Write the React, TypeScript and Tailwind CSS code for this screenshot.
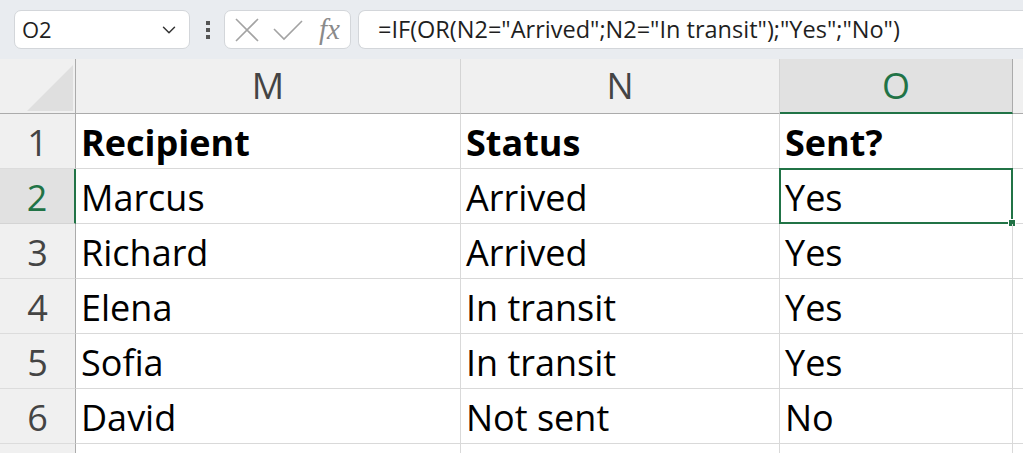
import { ChevronDown } from "lucide-react";

const rows = [
  { n: 1, cells: ["Recipient", "Status", "Sent?"], bold: true },
  { n: 2, cells: ["Marcus", "Arrived", "Yes"] },
  { n: 3, cells: ["Richard", "Arrived", "Yes"] },
  { n: 4, cells: ["Elena", "In transit", "Yes"] },
  { n: 5, cells: ["Sofia", "In transit", "Yes"] },
  { n: 6, cells: ["David", "Not sent", "No"] },
  { n: 7, cells: ["", "", ""] },
];

const cellFont = { fontFamily: '"Open Sans", "Noto Sans", sans-serif' };

function Toolbar() {
  return (
    <div className="flex h-[59px] items-center bg-[#e9ecf0] pl-[14px]" style={cellFont}>
      <div className="flex h-[39px] w-[176px] items-center justify-between rounded-[7px] border border-[#d3d6da] bg-white pl-[7px] pr-[9px]">
        <span className="text-[22px] text-[#1f1f1f]">O2</span>
        <ChevronDown size={22} strokeWidth={1.6} className="text-[#333]" />
      </div>
      <div className="ml-[16px] flex flex-col gap-[3px]">
        <span className="h-[4px] w-[4px] bg-[#555]" />
        <span className="h-[4px] w-[4px] bg-[#555]" />
        <span className="h-[4px] w-[4px] bg-[#555]" />
      </div>
      <div className="ml-[14px] flex h-[39px] w-[127px] items-center rounded-[7px] border border-[#d3d6da] bg-white pl-[9px]">
        <svg width="26" height="26" viewBox="0 0 26 26" fill="none" stroke="#a3a3a3" strokeWidth="1.6">
          <path d="M2 2 L24 24 M24 2 L2 24" />
        </svg>
        <svg width="30" height="22" viewBox="0 0 30 22" fill="none" stroke="#a3a3a3" strokeWidth="1.6" className="ml-[13px]">
          <path d="M1 10 L11 20 L29 2" />
        </svg>
        <span
          className="ml-[16px] text-[29px] italic leading-none text-[#8a8a8a]"
          style={{ fontFamily: '"Liberation Serif", serif' }}
        >
          fx
        </span>
      </div>
      <div className="ml-[7px] flex h-[39px] flex-1 items-center rounded-l-[7px] border border-r-0 border-[#d3d6da] bg-white pl-[19px] text-[23.5px] text-[#1f1f1f]">
        =IF(OR(N2="Arrived";N2="In transit");"Yes";"No")
      </div>
    </div>
  );
}

function CornerCell() {
  return (
    <div className="flex h-[55px] items-end justify-end border-b border-r border-[#ababab] bg-[#f0f0f0] pb-[2px] pr-[2px]">
      <svg width="46" height="46" viewBox="0 0 46 46">
        <polygon points="0,46 46,46 46,0" fill="#dfdfdf" />
      </svg>
    </div>
  );
}

function ColHeader({ label, active }: { label: string; active?: boolean }) {
  return (
    <div
      className={
        active
          ? "flex h-[55px] items-center justify-center border-b-2 border-r border-b-[#217346] border-r-[#ababab] bg-[#e1e1e1] text-[36px] text-[#217346]"
          : "flex h-[55px] items-center justify-center border-b border-r border-b-[#ababab] border-r-[#d4d4d4] bg-[#f0f0f0] text-[36px] text-[#444]"
      }
    >
      {label}
    </div>
  );
}

export default function App() {
  return (
    <div className="h-[453px] w-[1023px] overflow-hidden bg-white">
      <Toolbar />
      <div className="grid grid-cols-[76px_385px_319px_233px_1fr]" style={cellFont}>
        <CornerCell />
        <ColHeader label="M" />
        <ColHeader label="N" />
        <ColHeader label="O" active />
        <div className="h-[55px] border-b border-[#ababab] bg-[#f0f0f0]" />
        {rows.map((r) => (
          <RowCells key={r.n} n={r.n} cells={r.cells} bold={r.bold} />
        ))}
      </div>
    </div>
  );
}

function RowCells({ n, cells, bold }: { n: number; cells: string[]; bold?: boolean }) {
  const active = n === 2;
  const label = n < 7 ? n : "";
  return (
    <>
      <div
        className={
          active
            ? "flex h-[55px] items-center justify-center border-b border-r-2 border-b-[#d4d4d4] border-r-[#217346] bg-[#e1e1e1] pt-[3px] text-[36px] text-[#217346]"
            : "flex h-[55px] items-center justify-center border-b border-r border-b-[#dcdcdc] border-r-[#ababab] bg-[#f0f0f0] pt-[3px] text-[36px] text-[#444]"
        }
      >
        {label}
      </div>
      {cells.map((c, i) => (
        <div
          key={i}
          className={
            "relative flex h-[55px] items-center border-b border-r border-[#d9d9d9] pl-[5px] pt-[4px] text-[36px] leading-none text-black " +
            (bold ? "font-bold" : "")
          }
        >
          {c}
          {active && i === 2 && (
            <div className="absolute -left-px -top-px bottom-[-1px] right-[-1px] border-2 border-[#217346]">
              <div className="absolute -bottom-[5px] -right-[5px] h-[8px] w-[8px] border border-white bg-[#217346]" />
            </div>
          )}
        </div>
      ))}
      <div className="h-[55px] border-b border-[#d9d9d9]" />
    </>
  );
}
